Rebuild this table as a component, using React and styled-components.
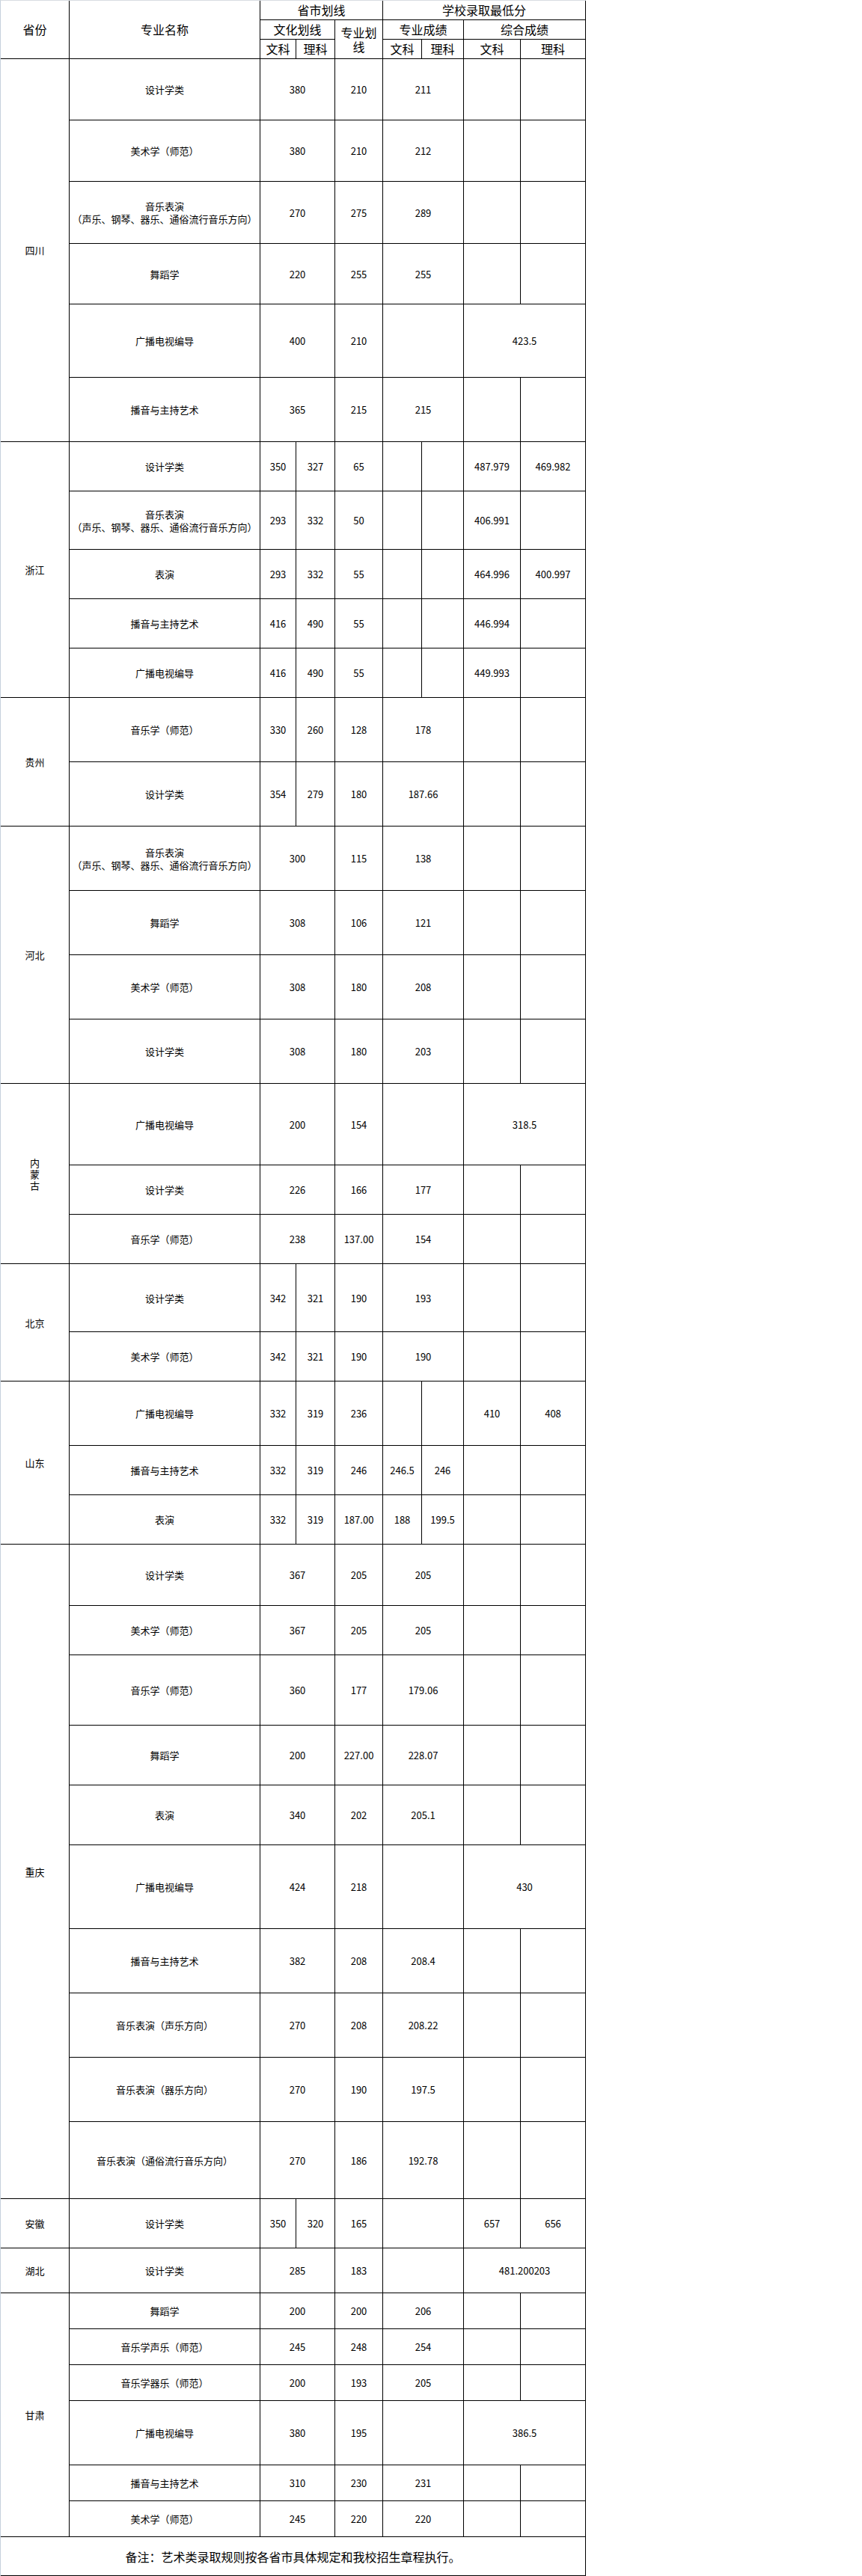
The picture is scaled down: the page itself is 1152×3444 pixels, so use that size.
import React from 'react';
import styled, { createGlobalStyle } from 'styled-components';

const GlobalStyle = createGlobalStyle`
  html, body {
    margin: 0;
    padding: 0;
    background: #fff;
  }
  body {
    font-family: "Noto Sans CJK SC", "Noto Sans", sans-serif;
    color: #000;
  }
`;

const Table = styled.table`
  width: 783px;
  table-layout: fixed;
  border-collapse: separate;
  border-spacing: 0;
  border-left: 1px solid #c6d1dc;
  border-top: 1px solid #d9dde2;
`;

const Row = styled.tr`
  height: ${props => props.$h}px;
`;

const HeadCell = styled.th`
  font-weight: 400;
  font-size: 16px;
  line-height: 19px;
  text-align: center;
  vertical-align: middle;
  padding: 0 2px;
  border-right: 1px solid #000;
  border-bottom: 1px solid #000;
`;

const Cell = styled.td`
  font-size: 13px;
  line-height: 17px;
  text-align: center;
  vertical-align: middle;
  padding: 0 2px;
  border-right: 1px solid #000;
  border-bottom: 1px solid #000;
  white-space: pre-line;
`;

const ProvinceCell = styled(Cell)`
  font-size: 13px;
  line-height: 15px;
`;

const NoteCell = styled(Cell)`
  font-size: 16px;
  line-height: 20px;
  white-space: nowrap;
`;

const widths = [92, 255, 48, 52, 64, 52, 56, 76, 87];

const MUSIC = '音乐表演\n（声乐、钢琴、器乐、通俗流行音乐方向）';

// 文化划线合并，专业成绩合并，综合成绩两格空
const A = (wen, zy, sc) => [[wen, 2], [zy, 1], [sc, 2], ['', 1], ['', 1]];
// 文化划线合并，专业成绩空，综合成绩合并
const B = (wen, zy, comp) => [[wen, 2], [zy, 1], ['', 2], [comp, 2]];
// 全部分开
const C = (wk, lk, zy, s1, s2, c7, c8) => [[wk, 1], [lk, 1], [zy, 1], [s1, 1], [s2, 1], [c7, 1], [c8, 1]];
// 文理分开，专业成绩合并
const D = (wk, lk, zy, sc, c7 = '', c8 = '') => [[wk, 1], [lk, 1], [zy, 1], [sc, 2], [c7, 1], [c8, 1]];

const data = [
  { p: '四川', rows: [
    { n: '设计学类', h: 82, c: A('380', '210', '211') },
    { n: '美术学（师范）', h: 82, c: A('380', '210', '212') },
    { n: MUSIC, h: 83, c: A('270', '275', '289') },
    { n: '舞蹈学', h: 81, c: A('220', '255', '255') },
    { n: '广播电视编导', h: 98, c: B('400', '210', '423.5') },
    { n: '播音与主持艺术', h: 86, c: A('365', '215', '215') },
  ] },
  { p: '浙江', rows: [
    { n: '设计学类', h: 66, c: C('350', '327', '65', '', '', '487.979', '469.982') },
    { n: MUSIC, h: 78, c: C('293', '332', '50', '', '', '406.991', '') },
    { n: '表演', h: 66, c: C('293', '332', '55', '', '', '464.996', '400.997') },
    { n: '播音与主持艺术', h: 66, c: C('416', '490', '55', '', '', '446.994', '') },
    { n: '广播电视编导', h: 66, c: C('416', '490', '55', '', '', '449.993', '') },
  ] },
  { p: '贵州', rows: [
    { n: '音乐学（师范）', h: 86, c: D('330', '260', '128', '178') },
    { n: '设计学类', h: 86, c: D('354', '279', '180', '187.66') },
  ] },
  { p: '河北', rows: [
    { n: MUSIC, h: 86, c: A('300', '115', '138') },
    { n: '舞蹈学', h: 86, c: A('308', '106', '121') },
    { n: '美术学（师范）', h: 86, c: A('308', '180', '208') },
    { n: '设计学类', h: 86, c: A('308', '180', '203') },
  ] },
  { p: '内\n蒙\n古', rows: [
    { n: '广播电视编导', h: 109, c: B('200', '154', '318.5') },
    { n: '设计学类', h: 66, c: A('226', '166', '177') },
    { n: '音乐学（师范）', h: 66, c: A('238', '137.00', '154') },
  ] },
  { p: '北京', rows: [
    { n: '设计学类', h: 91, c: D('342', '321', '190', '193') },
    { n: '美术学（师范）', h: 66, c: D('342', '321', '190', '190') },
  ] },
  { p: '山东', rows: [
    { n: '广播电视编导', h: 86, c: C('332', '319', '236', '', '', '410', '408') },
    { n: '播音与主持艺术', h: 66, c: C('332', '319', '246', '246.5', '246', '', '') },
    { n: '表演', h: 66, c: C('332', '319', '187.00', '188', '199.5', '', '') },
  ] },
  { p: '重庆', rows: [
    { n: '设计学类', h: 82, c: A('367', '205', '205') },
    { n: '美术学（师范）', h: 66, c: A('367', '205', '205') },
    { n: '音乐学（师范）', h: 94, c: A('360', '177', '179.06') },
    { n: '舞蹈学', h: 80, c: A('200', '227.00', '228.07') },
    { n: '表演', h: 80, c: A('340', '202', '205.1') },
    { n: '广播电视编导', h: 112, c: B('424', '218', '430') },
    { n: '播音与主持艺术', h: 86, c: A('382', '208', '208.4') },
    { n: '音乐表演（声乐方向）', h: 86, c: A('270', '208', '208.22') },
    { n: '音乐表演（器乐方向）', h: 86, c: A('270', '190', '197.5') },
    { n: '音乐表演（通俗流行音乐方向）', h: 103, c: A('270', '186', '192.78') },
  ] },
  { p: '安徽', rows: [
    { n: '设计学类', h: 66, c: D('350', '320', '165', '', '657', '656') },
  ] },
  { p: '湖北', rows: [
    { n: '设计学类', h: 60, c: B('285', '183', '481.200203') },
  ] },
  { p: '甘肃', rows: [
    { n: '舞蹈学', h: 48, c: A('200', '200', '206') },
    { n: '音乐学声乐（师范）', h: 48, c: A('245', '248', '254') },
    { n: '音乐学器乐（师范）', h: 48, c: A('200', '193', '205') },
    { n: '广播电视编导', h: 86, c: B('380', '195', '386.5') },
    { n: '播音与主持艺术', h: 48, c: A('310', '230', '231') },
    { n: '美术学（师范）', h: 48, c: A('245', '220', '220') },
  ] },
];

const App = () => {
  return (
    <>
      <GlobalStyle />
      <Table>
        <colgroup>
          {widths.map((w, i) => <col key={i} style={{ width: w }} />)}
        </colgroup>
        <thead>
          <Row $h={26}>
            <HeadCell rowSpan={3}>省份</HeadCell>
            <HeadCell rowSpan={3}>专业名称</HeadCell>
            <HeadCell colSpan={3}>省市划线</HeadCell>
            <HeadCell colSpan={4}>学校录取最低分</HeadCell>
          </Row>
          <Row $h={26}>
            <HeadCell colSpan={2}>文化划线</HeadCell>
            <HeadCell rowSpan={2}>专业划线</HeadCell>
            <HeadCell colSpan={2}>专业成绩</HeadCell>
            <HeadCell colSpan={2}>综合成绩</HeadCell>
          </Row>
          <Row $h={26}>
            <HeadCell>文科</HeadCell>
            <HeadCell>理科</HeadCell>
            <HeadCell>文科</HeadCell>
            <HeadCell>理科</HeadCell>
            <HeadCell>文科</HeadCell>
            <HeadCell>理科</HeadCell>
          </Row>
        </thead>
        <tbody>
          {data.map(prov =>
            prov.rows.map((r, i) => (
              <Row key={prov.p + i} $h={r.h}>
                {i === 0 && (
                  <ProvinceCell rowSpan={prov.rows.length}>{prov.p}</ProvinceCell>
                )}
                <Cell>{r.n}</Cell>
                {r.c.map(([v, span], j) => (
                  <Cell key={j} colSpan={span}>{v}</Cell>
                ))}
              </Row>
            ))
          )}
          <Row $h={52}>
            <NoteCell colSpan={9}>备注：艺术类录取规则按各省市具体规定和我校招生章程执行。</NoteCell>
          </Row>
        </tbody>
      </Table>
    </>
  );
};

export default App;
